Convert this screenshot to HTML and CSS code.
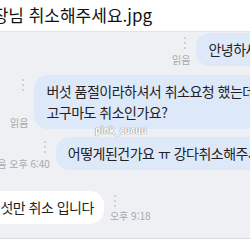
FILE: index.html
```html
<!DOCTYPE html>
<html lang="ko">
<head>
    <meta charset="UTF-8">
    <meta name="viewport" content="width=device-width, initial-scale=1.0">
    <title>사장님 취소해주세요.jpg</title>
    <link rel="stylesheet" href="styles.css">
</head>
<body>
    <div class="title">사장님 취소해주세요.jpg</div>
    <div class="chat">
        <!-- 내 메시지 -->
        <div class="row row-first">
            <div class="meta">
                <div class="dots"><span></span><span></span><span></span></div>
                <div class="label">읽음</div>
            </div>
            <div class="bubble mine">안녕하세요</div>
        </div>
        <div class="row row-second">
            <div class="meta">
                <div class="dots"><span></span><span></span><span></span></div>
                <div class="label">읽음</div>
            </div>
            <div class="bubble mine">버섯 품절이라하셔서 취소요청 했는데<br>고구마도 취소인가요?</div>
        </div>
        <div class="row row-third">
            <div class="meta">
                <div class="dots"><span></span><span></span><span></span></div>
                <div class="label">읽음 오후 6:40</div>
            </div>
            <div class="bubble mine">어떻게된건가요 ㅠ 강다취소해주세요</div>
        </div>
        <!-- 상대 메시지 -->
        <div class="row row-fourth">
            <div class="bubble theirs">버섯만 취소 입니다</div>
            <div class="meta meta-right">
                <div class="dots"><span></span><span></span><span></span></div>
                <div class="label">오후 9:18</div>
            </div>
        </div>
        <div class="watermark">pink_cucuu</div>
    </div>
</body>
</html>
```

FILE: styles.css
```css
body {
    margin: 0;
    width: 250px;
    height: 250px;
    overflow: hidden;
    background: #fff;
    font-family: "Noto Sans CJK KR", "Noto Sans", sans-serif;
    color: #1f2124;
}
.title {
    height: 31px;
    margin-left: -23px;
    font-size: 17px;
    line-height: 29px;
    white-space: nowrap;
    color: #111;
}
.chat {
    position: relative;
    height: 205px;
    padding-top: 1px;
    background: #eef0f3;
    border-top: 1px solid #e2e4e7;
    border-bottom: 1px solid #d8dadd;
    overflow: hidden;
    white-space: nowrap;
}
.row {
    display: flex;
    gap: 6px;
}
.row-first {
    margin-left: 172px;
}
.row-second {
    margin-top: 9px;
    margin-left: 10px;
}
.row-third {
    margin-top: 8px;
    margin-left: -12px;
}
.row-fourth {
    margin-top: 21px;
    margin-left: -24px;
}
.meta {
    display: flex;
    flex-direction: column;
    justify-content: space-between;
    align-items: flex-end;
    padding: 4px 0 0;
    font-size: 10px;
    line-height: 12px;
    color: #a6aaaf;
}
.meta-right {
    align-items: flex-start;
    padding-bottom: 2px;
}
.dots {
    display: flex;
    flex-direction: column;
    gap: 3px;
    margin: 0 4px;
}
.dots span {
    width: 2px;
    height: 2px;
    border-radius: 50%;
    background: #c3c7cc;
}
.bubble {
    padding: 6px 12px;
    font-size: 14px;
    line-height: 21px;
    letter-spacing: -0.5px;
    border-radius: 14px;
}
.mine {
    background: #dde9f8;
    flex: 1;
}
.theirs {
    background: #fff;
    padding-right: 10px;
}
.watermark {
    position: absolute;
    left: 95px;
    top: 92px;
    font-size: 9px;
    font-weight: bold;
    color: #fff;
    text-shadow: 0 0 1px #7f848a, 0 0 1px #7f848a;
}
```
